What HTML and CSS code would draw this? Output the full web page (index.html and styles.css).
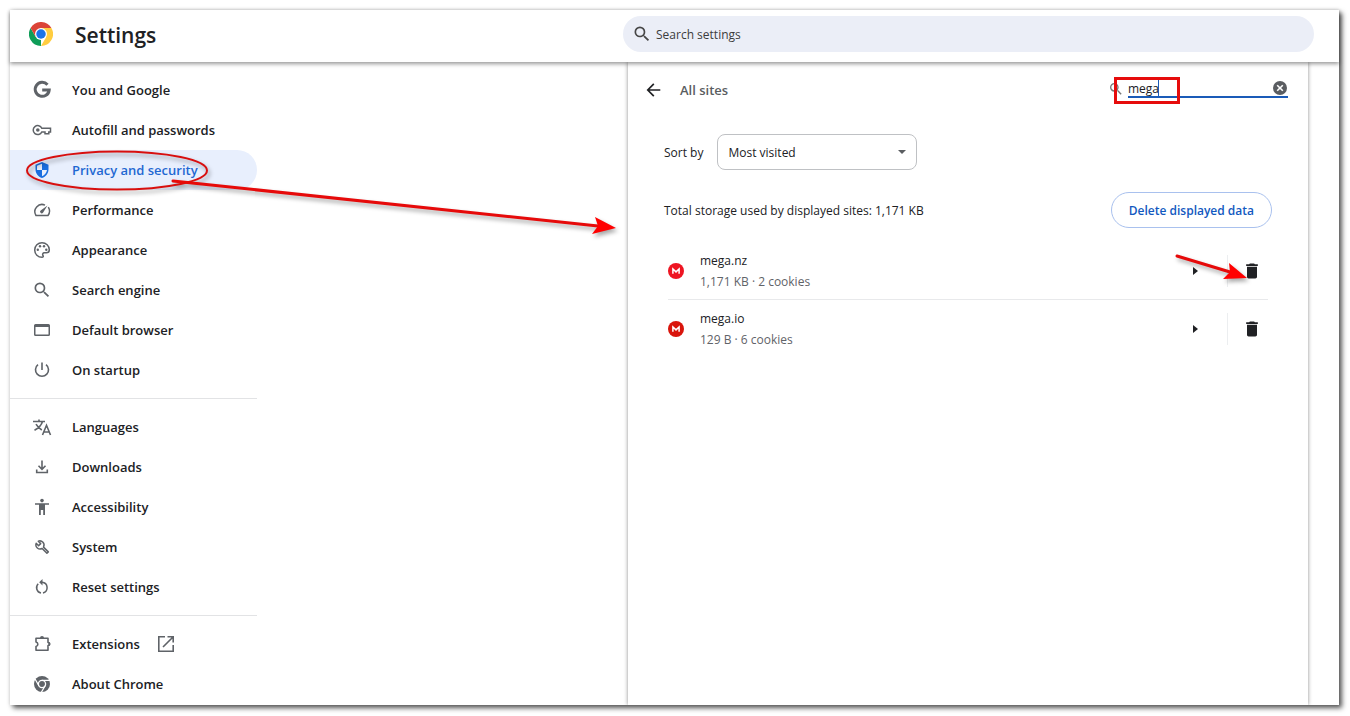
FILE: index.html
```html
<!DOCTYPE html>
<html lang="en">
<head>
<meta charset="utf-8">
<title>Settings</title>
<link rel="stylesheet" href="styles.css">
</head>
<body>
<svg class="defs" width="0" height="0" aria-hidden="true">
  <symbol id="i-search" viewBox="0 0 24 24"><path d="M15.5 14h-.79l-.28-.27A6.47 6.47 0 0 0 16 9.5 6.5 6.5 0 1 0 9.5 16c1.61 0 3.09-.59 4.23-1.57l.27.28v.79l5 4.99L20.49 19l-4.99-5zm-6 0C7.01 14 5 11.99 5 9.5S7.01 5 9.5 5 14 7.01 14 9.5 11.99 14 9.5 14z"/></symbol>
  <symbol id="i-trash" viewBox="0 0 24 24"><path d="M6 19c0 1.1.9 2 2 2h8c1.1 0 2-.9 2-2V7H6v12zM19 4h-3.500l-1-1h-5l-1 1H5v2h14V4z"/></symbol>
  <symbol id="i-mega" viewBox="0 0 16 16"><circle cx="8" cy="8" r="8"/><path d="M4.900 10.700V6L8 8.900 11.100 6v4.700" fill="none" stroke="#fff" stroke-width="1.500"/></symbol>
</svg>
<div class="frame">
  <header class="topbar">
    <div class="brand">
      <svg class="logo" viewBox="0 0 48 48" aria-hidden="true">
        <path fill="#0f9d58" d="M24 24 24 48A24 24 0 0 1 3.200 12L13.600 30z"/>
        <path fill="#ffcd40" d="M24 12h20.800A24 24 0 0 1 24 48L34.400 30z"/>
        <path fill="#db4437" d="M24 12h20.800A24 24 0 0 0 3.200 12L13.600 30z"/>
        <circle cx="24" cy="24" r="12" fill="#fff"/><circle cx="24" cy="24" r="9.500" fill="#1a73e8"/>
      </svg>
      <h1>Settings</h1>
    </div>
    <label class="global-search">
      <svg viewBox="0 0 24 24" aria-hidden="true"><use href="#i-search"/></svg>
      <input type="search" placeholder="Search settings" aria-label="Search settings">
    </label>
  </header>

  <div class="content">
    <nav class="sidebar" aria-label="Settings sections">
      <a class="item" href="#you"><svg viewBox="0 0 20 20"><path d="M15.500 4.700A7 7 0 1 0 17.200 10H10.200" fill="none" stroke="currentColor" stroke-width="3"/></svg>You and Google</a>
      <a class="item" href="#autofill"><svg viewBox="0 0 20 20"><g fill="none" stroke="currentColor" stroke-width="1.500"><path d="M9.800 8.200A4.500 4.500 0 1 0 9.800 12H13v1.800h3.800V12H18.500V8.200z"/></g><circle cx="5.800" cy="10" r="1.800"/></svg>Autofill and passwords</a>
      <a class="item selected" href="#privacy" aria-current="page"><svg viewBox="0 0 20 20"><path fill-rule="evenodd" d="M10 2 3.500 4.800v4.500c0 4 2.700 7.600 6.500 8.700 3.800-1.100 6.500-4.700 6.500-8.700V4.800zM10 10H15c-.4 2.800-2.400 5.400-5 6.300zM10 10H5V5.800l5-2.100z"/></svg>Privacy and security</a>
      <a class="item" href="#performance"><svg viewBox="0 0 20 20"><path d="M13 5.100A7.200 7.200 0 0 0 4 15.500H16A7.200 7.200 0 0 0 16.300 7.200" fill="none" stroke="currentColor" stroke-width="1.500"/><path d="M15.500 5.500 9 10.300a1.600 1.600 0 1 0 2 2.400z"/></svg>Performance</a>
      <a class="item" href="#appearance"><svg viewBox="0 0 20 20"><path d="M10 2.700a7.300 7.300 0 1 0 0 14.600c1.200 0 1.600-1 1-1.800-.8-1.200-.2-2.700 1.300-2.700h2c1.700 0 3-1.300 3-3.100 0-3.900-3.300-7-7.300-7z" fill="none" stroke="currentColor" stroke-width="1.500"/><circle cx="5.800" cy="9.700" r="1.200"/><circle cx="8" cy="6.300" r="1.200"/><circle cx="12" cy="6.300" r="1.200"/><circle cx="14.300" cy="9.700" r="1.200"/></svg>Appearance</a>
      <a class="item" href="#search"><svg viewBox="0 0 24 24"><use href="#i-search"/></svg>Search engine</a>
      <a class="item" href="#browser"><svg viewBox="0 0 20 20"><path fill-rule="evenodd" d="M3.500 4h13A1.500 1.500 0 0 1 18 5.500v9a1.500 1.500 0 0 1-1.500 1.500h-13A1.500 1.500 0 0 1 2 14.500v-9A1.500 1.500 0 0 1 3.500 4zm0 3v7.500h13V7z"/></svg>Default browser</a>
      <a class="item" href="#startup"><svg viewBox="0 0 20 20"><path d="M10 2.500V10M6 4.600a6.500 6.500 0 1 0 8 0" fill="none" stroke="currentColor" stroke-width="1.600"/></svg>On startup</a>
      <hr>
      <a class="item" href="#languages"><svg viewBox="0 0 20 20"><path d="M1 4.500H13M7 2.500V4.500M10.500 4.500C9.500 8 6.500 11.200 2.500 13.300M4 7.200C5.300 9.500 7 11.200 9.800 13M10.500 18 14.500 8.300 18.500 18M12 15h5" fill="none" stroke="currentColor" stroke-width="1.600"/></svg>Languages</a>
      <a class="item" href="#downloads"><svg viewBox="0 0 20 20"><path d="M10 3.500V12M6.500 8.800 10 12.300l3.500-3.500M4.700 12.500v3h10.600v-3" fill="none" stroke="currentColor" stroke-width="1.600"/></svg>Downloads</a>
      <a class="item" href="#accessibility"><svg viewBox="0 0 20 20"><circle cx="10" cy="3.600" r="1.800"/><path d="M3 6.200h14v1.600h-4V18h-1.800v-5H8.800v5H7V7.800H3z"/></svg>Accessibility</a>
      <a class="item" href="#system"><svg viewBox="0 0 20 20"><path d="M16.300 14.900 11.500 10.100A4.200 4.200 0 0 0 6.300 4.200L8.700 6.600 6.600 8.700 4.200 6.300A4.200 4.200 0 0 0 10.100 11.500l4.800 4.800z" fill="none" stroke="currentColor" stroke-width="1.500" stroke-linejoin="round"/></svg>System</a>
      <a class="item" href="#reset"><svg viewBox="0 0 20 20"><path d="M9 16A5.500 5.500 0 0 1 6.200 6.700M9 5.200h1a5.500 5.500 0 0 1 1 10.800" fill="none" stroke="currentColor" stroke-width="1.500"/><path d="M10.500 2v6.400L7.200 5.200z"/></svg>Reset settings</a>
      <hr>
      <a class="item" href="#extensions"><svg viewBox="0 0 20 20"><path d="M4 4.300h12v4.200a1.500 1.500 0 0 1 0 3v4.700H4v-3.700a2.300 2.300 0 0 0 0-4.500z" fill="none" stroke="currentColor" stroke-width="1.600" stroke-linejoin="round"/><path d="M8 4a2 2 0 0 1 4 0zM16.500 8a2 2 0 0 1 0 4z"/></svg>Extensions<svg viewBox="0 0 20 20"><path d="M9 2.800H2.800v14.400h14.400V11M11.500 2.800h5.700v5.700M17 3 7 13" fill="none" stroke="currentColor" stroke-width="1.600"/></svg></a>
      <a class="item" href="#about"><svg viewBox="0 0 20 20"><circle cx="10" cy="10" r="8"/><g fill="none" stroke="#fff" stroke-width="1.300"><circle cx="10" cy="10" r="3.600"/><path d="M10 6.400h8M6.900 11.800l-4-7M13.100 11.800l-4 7"/></g></svg>About Chrome</a>
    </nav>

    <main class="panel">
      <div class="panel-head">
        <button class="icon-btn back" aria-label="Back"><svg viewBox="0 0 20 20"><path d="M17 10H3.500M9.800 3.300 3.100 10l6.700 6.700" fill="none" stroke="currentColor" stroke-width="1.900"/></svg></button>
        <h2>All sites</h2>
        <div class="site-search">
          <svg viewBox="0 0 24 24" aria-hidden="true"><use href="#i-search"/></svg>
          <div class="field">
            <input type="text" value="mega" aria-label="Search sites">
            <span class="caret"></span>
            <button class="icon-btn clear" aria-label="Clear search"><svg viewBox="0 0 16 16"><circle cx="8" cy="8" r="7"/><path d="m5.200 5.200 5.600 5.600M10.800 5.200l-5.600 5.600" stroke="#fff" stroke-width="1.600"/></svg></button>
          </div>
        </div>
      </div>

      <div class="sort">
        <label for="sort">Sort by</label>
        <div class="select">
          <select id="sort"><option>Most visited</option><option>Data stored</option><option>Name</option></select>
          <svg viewBox="0 0 8 4" aria-hidden="true"><path d="M0 0h8L4 4z"/></svg>
        </div>
      </div>

      <div class="total">
        <span>Total storage used by displayed sites: 1,171 KB</span>
        <button class="pill">Delete displayed data</button>
      </div>

      <ul class="sites">
        <li>
          <svg class="fav nz" viewBox="0 0 16 16" aria-hidden="true"><use href="#i-mega"/></svg>
          <div class="site"><div>mega.nz</div><div class="meta">1,171 KB · 2 cookies</div></div>
          <button class="icon-btn expand" aria-label="Show details for mega.nz"><svg viewBox="0 0 5 8"><path d="M0 0v8l5-4z"/></svg></button>
          <span class="rule"></span>
          <button class="icon-btn trash" aria-label="Delete mega.nz data"><svg viewBox="0 0 24 24"><use href="#i-trash"/></svg></button>
        </li>
        <li>
          <svg class="fav io" viewBox="0 0 16 16" aria-hidden="true"><use href="#i-mega"/></svg>
          <div class="site"><div>mega.io</div><div class="meta">129 B · 6 cookies</div></div>
          <button class="icon-btn expand" aria-label="Show details for mega.io"><svg viewBox="0 0 5 8"><path d="M0 0v8l5-4z"/></svg></button>
          <span class="rule"></span>
          <button class="icon-btn trash" aria-label="Delete mega.io data"><svg viewBox="0 0 24 24"><use href="#i-trash"/></svg></button>
        </li>
      </ul>
    </main>
  </div>
</div>

<svg class="marks" width="1350" height="716" viewBox="0 0 1350 716" aria-hidden="true">
  <g class="cast">
    <ellipse cx="117" cy="170.500" rx="90" ry="19" fill="none" stroke="#d80f0f" stroke-width="2"/>
    <path d="M173 181 598 226" fill="none" stroke="#e60a0a" stroke-width="3" stroke-linecap="round"/>
    <path d="m595 217 21 11-24 6 6-8z" fill="#f00"/>
    <path d="M1177 256 1230 272" fill="none" stroke="#e60a0a" stroke-width="3" stroke-linecap="round"/>
    <path d="m1229 263 18 15-24 1 7-7z" fill="#f00"/>
  </g>
  <path d="M1115.500 78.500h63v24h-63z" fill="none" stroke="#e60c0c" stroke-width="3"/>
</svg>
</body>
</html>
```
FILE: styles.css
```css
* { box-sizing: border-box; }

body {
  margin: 0;
  padding: 10px 11px 11px 10px;
  background: #fff;
  color: #202124;
  font: 12px/20px "Open Sans", "Noto Sans", sans-serif;
}

h1, h2, ul { margin: 0; padding: 0; }
input, select, button { font: inherit; color: inherit; }
svg { fill: currentColor; display: block; flex: none; }
.defs { position: absolute; }

.frame {
  min-height: calc(100vh - 21px);
  display: flex;
  flex-direction: column;
  background: #fff;
  box-shadow: 3px 3px 5px rgba(0, 0, 0, .65), 0 0 4px rgba(0, 0, 0, .15);
}

.topbar {
  height: 52px;
  display: grid;
  grid-template-columns: 1fr minmax(0, 691px) 25px;
  align-items: center;
  box-shadow: 0 2px 4px rgba(0, 0, 0, .4);
  z-index: 1;
}
.brand { display: flex; align-items: center; gap: 22px; padding: 0 0 4px 19px; }
.logo { width: 24px; height: 24px; }
h1 { padding-top: 2px; font-size: 21px; line-height: 28px; font-weight: 600; }

.global-search {
  height: 36px;
  margin-bottom: 4px;
  padding: 0 9px;
  display: flex;
  align-items: center;
  gap: 4px;
  border-radius: 18px;
  background: #ebeef7;
  color: #474747;
}
.global-search svg { width: 20px; height: 20px; }
.global-search input {
  flex: 1;
  min-width: 0;
  padding: 2px 0 0;
  border: 0;
  outline: 0;
  background: none;
}
.global-search input::placeholder { color: #3c3c3c; opacity: 1; }

.content {
  flex: 1;
  display: grid;
  grid-template-columns: 247px minmax(0, 680px);
  justify-content: space-between;
  padding-right: 31px;
}

.sidebar { padding-top: 8px; }
.sidebar hr { height: 1px; margin: 8px 0; border: 0; background: #e2e3e5; }
.item {
  height: 40px;
  padding-left: 22px;
  display: flex;
  align-items: center;
  gap: 20px;
  border-radius: 0 20px 20px 0;
  color: #202124;
  font-size: 13px;
  font-weight: 600;
  text-decoration: none;
}
.item svg { width: 20px; height: 20px; color: #5f6368; }
.item svg + svg { margin-left: -4px; }
.item.selected { background: #e8effd; color: #1f68d2; }
.item.selected svg { color: #1a6fe0; }

.panel {
  padding: 8px 20px 0 16px;
  background: #fff;
  box-shadow: 0 0 4px rgba(0, 0, 0, .45);
  clip-path: inset(0 -6px);
}
.panel-head { height: 40px; display: flex; align-items: center; gap: 16px; }
h2 { flex: 1; font-size: 13px; font-weight: 600; color: #5a5d61; }

.icon-btn {
  padding: 0;
  border: 0;
  background: none;
  display: grid;
  place-items: center;
}
.back { width: 20px; height: 20px; }
.back svg { width: 18px; height: 18px; }

.site-search { display: flex; align-items: center; margin-bottom: 2px; }
.site-search > svg { width: 16px; height: 16px; margin-right: 4px; color: #777; }
.field {
  position: relative;
  width: 160px;
  height: 18px;
  display: flex;
  border-bottom: 2px solid #1a5bb8;
}
.field input {
  flex: 1;
  min-width: 0;
  padding: 2px 0 0;
  border: 0;
  outline: 0;
  background: none;
}
.caret { position: absolute; left: 30px; top: 0; width: 1px; height: 16px; background: #1a5bb8; }
.clear { width: 16px; height: 16px; color: #5a5d61; }
.clear svg { width: 16px; height: 16px; }

.sort, .total, .sites { margin-left: 20px; }
.sort { margin-top: 24px; display: flex; align-items: center; gap: 14px; }
.sort label, .total span { padding-top: 2px; }
.select { position: relative; width: 200px; }
.select select {
  display: block;
  width: 100%;
  height: 36px;
  padding: 2px 10px 0;
  border: 1px solid #bfc1c4;
  border-radius: 8px;
  background: #fff;
  appearance: none;
}
.select svg { position: absolute; right: 11px; top: 16px; width: 8px; height: 4px; color: #5a5d61; }

.total {
  margin-top: 22px;
  margin-right: 16px;
  display: flex;
  align-items: center;
  justify-content: space-between;
}
.pill {
  height: 36px;
  padding: 2px 17px 0;
  border: 1px solid #a9c1ee;
  border-radius: 18px;
  background: #fff;
  color: #1259c0;
  font-weight: 600;
}

.sites { margin-top: 14px; margin-right: 20px; list-style: none; }
.sites li {
  height: 58px;
  margin-left: 4px;
  display: flex;
  align-items: center;
}
.sites li + li { box-shadow: 0 -1px #e8e9eb; }
.fav { width: 16px; height: 16px; margin-right: 16px; }
.nz { color: #ee1522; }
.io { color: #d9150c; }
.site { flex: 1; line-height: 21px; }
.meta { color: #5f6368; }
.expand { width: 32px; height: 32px; margin-right: 16px; }
.expand svg { width: 5px; height: 8px; }
.rule { width: 1px; height: 32px; background: #eceef0; }
.trash { width: 20px; height: 20px; margin: 0 6px 0 14px; }
.trash svg { width: 20px; height: 20px; }

.marks {
  position: absolute;
  left: 0;
  top: 0;
  z-index: 2;
  pointer-events: none;
}
.cast { filter: drop-shadow(2px 3px 2px rgba(0, 0, 0, .35)); }
```
